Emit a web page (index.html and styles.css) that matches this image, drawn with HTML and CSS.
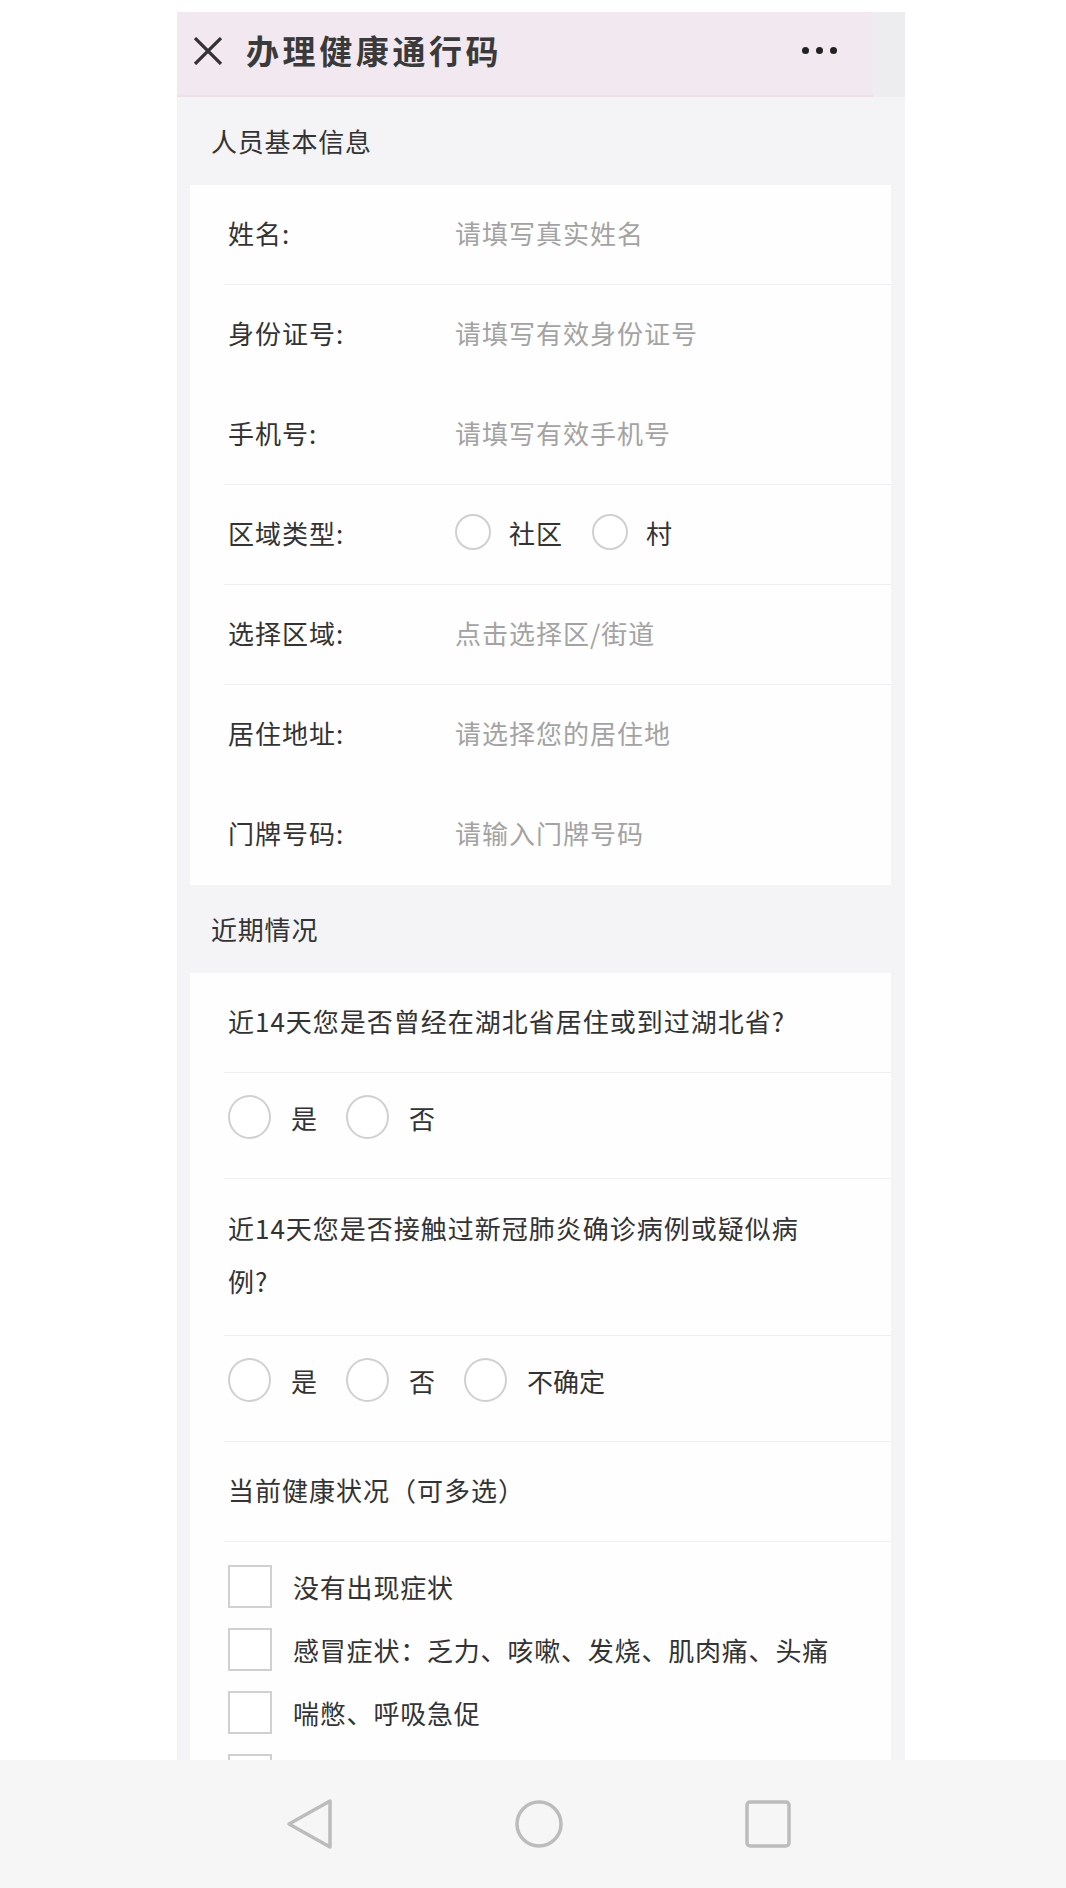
FILE: index.html
```html
<!DOCTYPE html>
<html lang="zh-CN">
<head>
<meta charset="utf-8">
<title>办理健康通行码</title>
<link rel="stylesheet" href="styles.css">
</head>
<body>
<div class="screen">
  <header class="topbar">
    <div class="topbar-main">
      <svg class="close" width="30" height="28" viewBox="0 0 30 28"><path d="M2 1 L28 27 M28 1 L2 27" stroke="#333" stroke-width="3.2" fill="none"/></svg>
      <h1 class="title">办理健康通行码</h1>
      <span class="more"><i></i><i></i><i></i></span>
    </div>
    <div class="topbar-side"></div>
  </header>

  <div class="section-title">人员基本信息</div>
  <div class="card">
    <div class="field line"><span class="label">姓名:</span><span class="ph">请填写真实姓名</span></div>
    <div class="field"><span class="label">身份证号:</span><span class="ph">请填写有效身份证号</span></div>
    <div class="field line"><span class="label">手机号:</span><span class="ph">请填写有效手机号</span></div>
    <div class="field line"><span class="label">区域类型:</span>
      <span class="radios small">
        <span class="opt"><span class="circle"></span>社区</span>
        <span class="opt"><span class="circle"></span>村</span>
      </span>
    </div>
    <div class="field line"><span class="label">选择区域:</span><span class="ph">点击选择区/街道</span></div>
    <div class="field"><span class="label">居住地址:</span><span class="ph">请选择您的居住地</span></div>
    <div class="field"><span class="label">门牌号码:</span><span class="ph">请输入门牌号码</span></div>
  </div>

  <div class="section-title">近期情况</div>
  <div class="card">
    <div class="q line">近14天您是否曾经在湖北省居住或到过湖北省?</div>
    <div class="opts line">
      <span class="opt"><span class="circle"></span>是</span>
      <span class="opt"><span class="circle"></span>否</span>
    </div>
    <div class="q multi line">近14天您是否接触过新冠肺炎确诊病例或疑似病例?</div>
    <div class="opts line">
      <span class="opt"><span class="circle"></span>是</span>
      <span class="opt"><span class="circle"></span>否</span>
      <span class="opt"><span class="circle"></span>不确定</span>
    </div>
    <div class="q line">当前健康状况（可多选）</div>
    <div class="checks">
      <div class="check"><span class="box"></span>没有出现症状</div>
      <div class="check"><span class="box"></span>感冒症状：乏力、咳嗽、发烧、肌肉痛、头痛</div>
      <div class="check"><span class="box"></span>喘憋、呼吸急促</div>
      <div class="check"><span class="box"></span></div>
    </div>
  </div>
</div>

<nav class="navbar">
  <svg class="nav-icon" width="48" height="52" viewBox="0 0 48 52"><path d="M44 3 L44 49 L3 26 Z" fill="none" stroke="#bcbcbc" stroke-width="3.5" stroke-linejoin="round"/></svg>
  <svg class="nav-icon" width="48" height="52" viewBox="0 0 48 52"><circle cx="24" cy="26" r="22" fill="none" stroke="#bcbcbc" stroke-width="3.5"/></svg>
  <svg class="nav-icon" width="48" height="52" viewBox="0 0 48 52"><rect x="3" y="4" width="42" height="44" rx="3" fill="none" stroke="#bcbcbc" stroke-width="3.5"/></svg>
</nav>
</body>
</html>
```

FILE: styles.css
```css
* { box-sizing: border-box; }

html, body {
  margin: 0;
  padding: 0;
  background: #ffffff;
}

body {
  font-family: "Noto Sans CJK SC", "Noto Sans", sans-serif;
  color: #333;
  width: 1066px;
  height: 1888px;
  overflow: hidden;
}

.screen {
  margin: 12px 0 0 177px;
  width: 728px;
  height: 1748px;
  overflow: hidden;
  background: #f4f3f6;
}

/* top bar */
.topbar {
  display: flex;
  height: 85px;
}
.topbar-main {
  width: 696px;
  display: flex;
  align-items: center;
  padding: 0 36px 6px 16px;
  background: #f2e9f0;
  border-bottom: 2px solid #eedfe8;
}
.topbar-side {
  flex: 1;
  background: #ededef;
}
.close { display: block; flex: none; }
.title {
  margin: 0 0 0 23px;
  font-size: 33px;
  font-weight: 700;
  letter-spacing: 3.6px;
  color: #3a3a3a;
  line-height: 1;
}
.more {
  margin-left: auto;
  display: flex;
  gap: 7px;
}
.more i {
  display: block;
  width: 7px;
  height: 7px;
  border-radius: 50%;
  background: #222;
}

/* sections */
.section-title {
  height: 88px;
  display: flex;
  align-items: center;
  padding-left: 34px;
  padding-bottom: 2px;
  font-size: 26px;
  letter-spacing: 0.8px;
  color: #333;
}

.card {
  margin: 0 14px 0 13px;
  background: #fefefe;
  padding-left: 34px;
}

.field {
  height: 100px;
  display: flex;
  align-items: center;
  padding-left: 4px;
  font-size: 26px;
  letter-spacing: 1px;
  padding-bottom: 5px;
}
.line { border-bottom: 1.5px solid #efeff1; }

.label {
  width: 227px;
  flex: none;
  color: #333;
}
.ph { color: #a3a3a3; }

.radios { display: flex; align-items: center; }
.opt {
  display: inline-flex;
  align-items: center;
  margin-right: 29px;
  color: #333;
}
.circle {
  display: inline-block;
  border-radius: 50%;
  border: 2px solid #d0d0d0;
  width: 43px;
  height: 44px;
  margin-right: 20px;
  background: #fff;
}
.radios.small .circle {
  width: 36px;
  height: 36px;
  margin-right: 18px;
}

.q {
  height: 100px;
  display: flex;
  align-items: center;
  padding: 0 0 5px 4px;
  font-size: 26px;
  letter-spacing: 1px;
}
.q.multi {
  height: 157px;
  display: block;
  padding: 22px 70px 28px 4px;
  line-height: 53px;
}

.opts {
  display: flex;
  align-items: center;
  padding: 22px 0 39px 4px;
  font-size: 26px;
}

.checks {
  padding: 23px 0 0 4px;
  display: flex;
  flex-direction: column;
  gap: 20px;
}
.check {
  display: flex;
  align-items: center;
  min-height: 43px;
  font-size: 26px;
  letter-spacing: 0.8px;
  color: #333;
}
.box {
  width: 44px;
  height: 43px;
  border: 2px solid #d0d0d0;
  margin-right: 21px;
  flex: none;
  background: #fff;
}

/* android nav bar */
.navbar {
  height: 128px;
  background: #f6f6f6;
  display: flex;
  align-items: center;
  padding-left: 286px;
  gap: 181px;
}
.nav-icon { display: block; }
```
